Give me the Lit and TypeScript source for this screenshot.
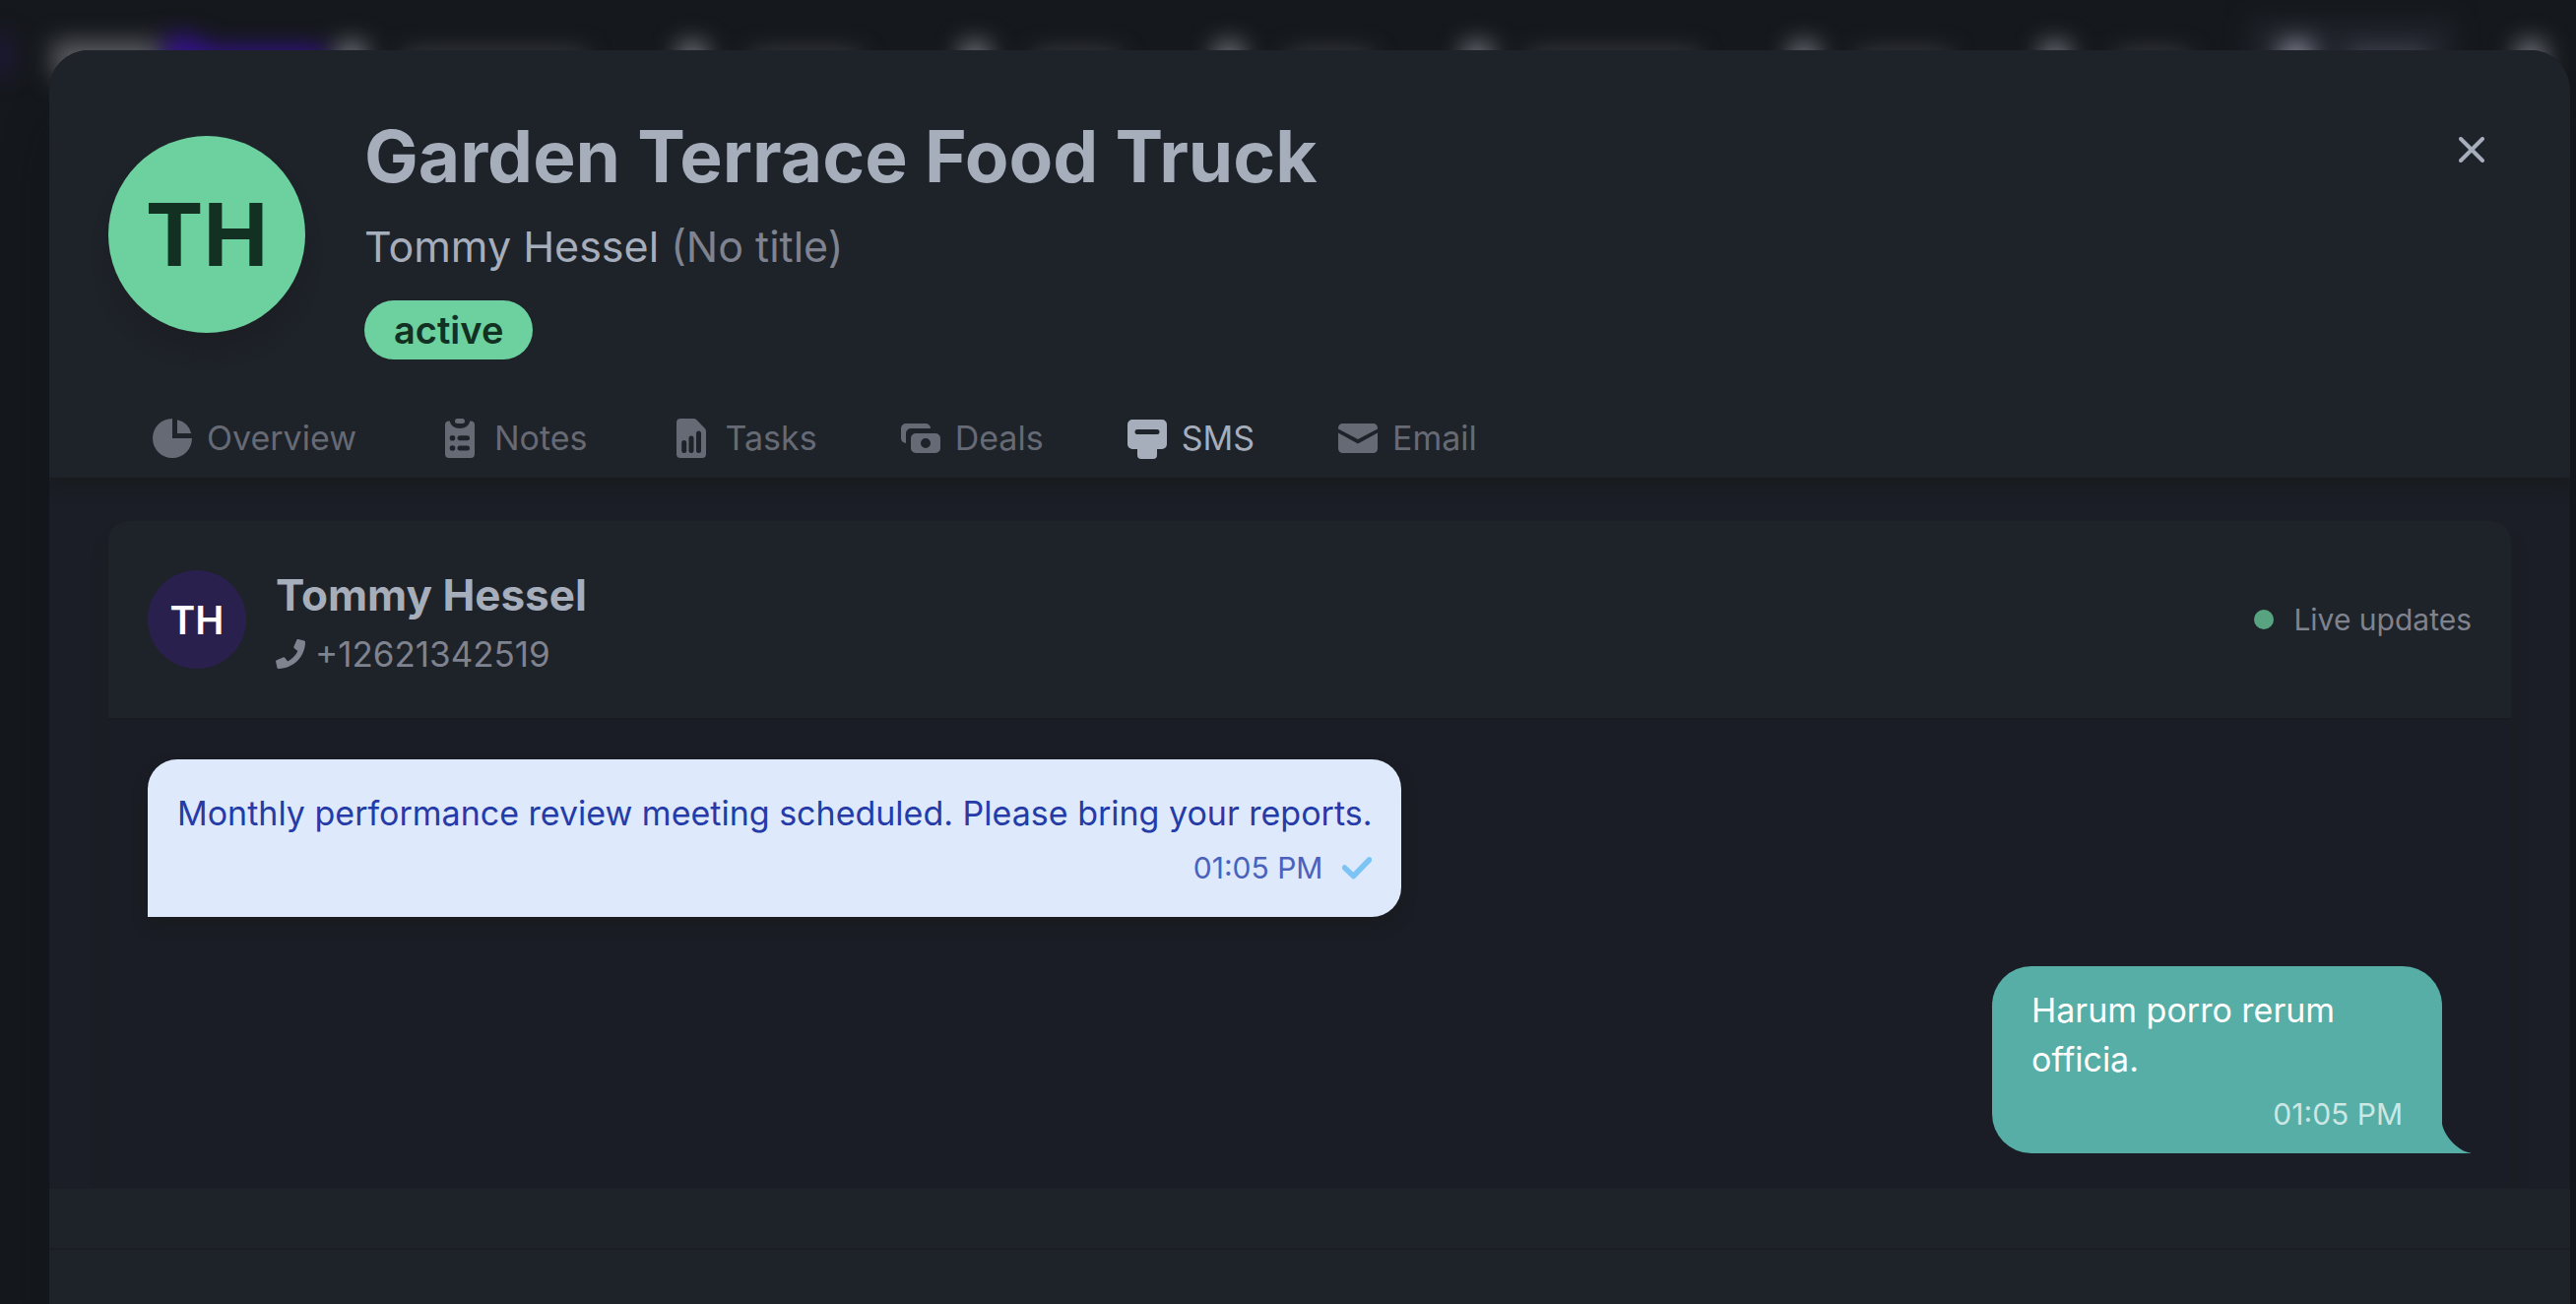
import { LitElement, html, css, svg } from "lit";
import { customElement, state } from "lit/decorators.js";
import { classMap } from "lit/directives/class-map.js";

const icons = {
  overview: svg`<svg viewBox="0 0 40 40" width="40" height="40"><path d="M20 0A20 20 0 1 0 40 20H20Z"/><path d="M25 1.2V15H39.2A19 19 0 0 0 25 1.2Z"/></svg>`,
  notes: svg`<svg viewBox="0 0 30 40" width="30" height="40"><path fill-rule="evenodd" d="M4 2.5H4.8C5.4 7 9.5 10 15 10S24.6 7 25.2 2.500H26A4 4 0 0 1 30 6.500V36A4 4 0 0 1 26 40H4A4 4 0 0 1 0 36V6.500A4 4 0 0 1 4 2.500ZM7.500 17A2.800 2.800 0 1 0 7.500 22.600A2.800 2.800 0 0 0 7.500 17ZM15 17.300A2.500 2.500 0 0 0 15 22.300H22.500A2.500 2.500 0 0 0 22.500 17.300ZM7.500 27.200A2.800 2.800 0 1 0 7.500 32.800A2.800 2.800 0 0 0 7.500 27.200ZM15 27.500A2.500 2.500 0 0 0 15 32.500H22.500A2.500 2.500 0 0 0 22.500 27.500Z"/><rect x="10" y="0" width="10" height="5" rx="2.500"/></svg>`,
  tasks: svg`<svg viewBox="0 0 30 40" width="30" height="40"><path fill-rule="evenodd" d="M4 0H17.500Q19 0 20.100 1.100L28.900 9.900Q30 11 30 12.500V36A4 4 0 0 1 26 40H4A4 4 0 0 1 0 36V4A4 4 0 0 1 4 0ZM5.200 24.500V32.500A2.500 2.500 0 0 0 10.200 32.500V24.500A2.500 2.500 0 0 0 5.200 24.500ZM12.500 20V32.500A2.500 2.500 0 0 0 17.500 32.500V20A2.500 2.500 0 0 0 12.500 20ZM20 15V32.500A2.500 2.500 0 0 0 25 32.500V15A2.500 2.500 0 0 0 20 15Z"/></svg>`,
  deals: svg`<svg viewBox="0 0 40 40" width="40" height="40"><path d="M5 5H25A5 5 0 0 1 30 10H10A5 5 0 0 0 5 15V25A5 5 0 0 1 0 20V10A5 5 0 0 1 5 5Z"/><path fill-rule="evenodd" d="M15 15H35A5 5 0 0 1 40 20V30A5 5 0 0 1 35 35H15A5 5 0 0 1 10 30V20A5 5 0 0 1 15 15ZM25 20A5 5 0 1 0 25 30A5 5 0 0 0 25 20Z"/></svg>`,
  sms: svg`<svg viewBox="0 0 40 42" width="40" height="42"><path fill-rule="evenodd" d="M5 2H35A5 5 0 0 1 40 7V27A5 5 0 0 1 35 32H30V38A4 4 0 0 1 26 42H14A4 4 0 0 1 10 38V32H5A5 5 0 0 1 0 27V7A5 5 0 0 1 5 2ZM10 12A2.500 2.500 0 0 0 10 17H30A2.500 2.500 0 0 0 30 12Z"/></svg>`,
  email: svg`<svg viewBox="0 0 40 40" width="40" height="40"><path d="M4.500 5H35.500A4.500 4.500 0 0 1 40 9.500V10.500L20 21L0 10.500V9.500A4.500 4.500 0 0 1 4.500 5Z"/><path d="M0 14.500L20 25.500L40 14.500V30.500A4.500 4.500 0 0 1 35.500 35H4.500A4.500 4.500 0 0 1 0 30.500Z"/></svg>`,
};

const tabs: { id: keyof typeof icons; label: string }[] = [
  { id: "overview", label: "Overview" },
  { id: "notes", label: "Notes" },
  { id: "tasks", label: "Tasks" },
  { id: "deals", label: "Deals" },
  { id: "sms", label: "SMS" },
  { id: "email", label: "Email" },
];

@customElement("message-thread")
export class MessageThread extends LitElement {
  static styles = css`
    :host { display: flex; flex-direction: column; flex: 1; }
    .card {
      flex: 1;
      border-radius: 20px 20px 0 0;
      background: #1a1d25;
      box-shadow: 0 20px 15px rgba(27, 30, 31, 1);
    }
    .head {
      display: flex;
      align-items: center;
      gap: 30px;
      padding: 40px;
      border-radius: 20px 20px 0 0;
      background: #1e2229;
      border-bottom: 2px solid #191b20;
    }
    .avatar {
      display: grid;
      place-items: center;
      width: 100px;
      height: 100px;
      border-radius: 50%;
      background: #2a204d;
      color: #fff;
      font-size: 39px;
      font-weight: 600;
    }
    .who { flex: 1; }
    .name { margin: 0; font-size: 44px; line-height: 70px; font-weight: 700; color: #a6adbb; }
    .phone {
      display: flex;
      align-items: center;
      gap: 10px;
      font-size: 35px;
      line-height: 50px;
      color: #7f838f;
      text-decoration: none;
    }
    .phone svg { fill: currentColor; }
    .live { display: flex; align-items: center; gap: 20px; font-size: 30px; line-height: 40px; color: #7f838f; }
    .dot { width: 20px; height: 20px; border-radius: 50%; background: #58a481; }
    .list {
      display: flex;
      flex-direction: column;
      gap: 50px;
      margin: 0;
      padding: 40px;
      list-style: none;
    }
    .msg { font-size: 34px; line-height: 50px; }
    .msg p { margin: 0; }
    .in {
      align-self: flex-start;
      padding: 30px;
      border-radius: 30px 30px 30px 0;
      background: #dee9fb;
      color: #243ba8;
      box-shadow: 0 8px 15px -2px #191b1d;
    }
    .out {
      position: relative;
      align-self: flex-end;
      box-sizing: border-box;
      max-width: 457px;
      margin-right: 30px;
      padding: 20px 40px;
      border-radius: 40px 40px 0 40px;
      background: #56aea6;
      color: #fff;
    }
    .tail { position: absolute; left: 100%; bottom: 0; fill: #56aea6; }
    .meta {
      display: flex;
      align-items: center;
      justify-content: flex-end;
      gap: 20px;
      margin-top: 10px;
      font-size: 30px;
      line-height: 40px;
    }
    .in time { color: #4b61ba; }
    .out time { color: #cce7e4; }
  `;

  render() {
    return html`
      <section class="card">
        <header class="head">
          <div class="avatar">TH</div>
          <div class="who">
            <h2 class="name">Tommy Hessel</h2>
            <a class="phone" href="tel:+12621342519">
              <svg viewBox="0 0 512 512" width="30" height="30" aria-hidden="true"><path d="M493 25L389 1C378-2 366 4 362 15L314 127C310 137 313 149 321 156L382 206C346 282 284 345 207 382L157 321C150 312 138 309 128 314L16 362C5 366-1 378 1 390L25 494C28 504 38 512 49 512C305 512 512 305 512 49C512 38 504 28 493 25Z"/></svg>
              <span>+12621342519</span>
            </a>
          </div>
          <div class="live"><span class="dot"></span><span>Live updates</span></div>
        </header>
        <ul class="list">
          <li class="msg in">
            <p>Monthly performance review meeting scheduled. Please bring your reports.</p>
            <div class="meta">
              <time>01:05 PM</time>
              <svg viewBox="0 0 30 30" width="30" height="30" aria-label="Delivered"><path d="M2.500 15L11.500 23.500L27.500 7" fill="none" stroke="#7cc4f5" stroke-width="5.500" stroke-linejoin="round" stroke-linecap="round"/></svg>
            </div>
          </li>
          <li class="msg out">
            <p>Harum porro rerum officia.</p>
            <div class="meta"><time>01:05 PM</time></div>
            <svg class="tail" viewBox="0 0 30 30" width="30" height="30" aria-hidden="true"><path d="M0 0C2 13 18 29 29 29.500V30H0Z"/></svg>
          </li>
        </ul>
      </section>
    `;
  }
}

@customElement("app-root")
export class AppRoot extends LitElement {
  @state() private active = "sms";

  static styles = css`
    :host {
      display: flex;
      flex-direction: column;
      position: relative;
      box-sizing: border-box;
      height: 100vh;
      overflow: hidden;
      background: #15181c;
      font-family: Inter, "Liberation Sans", sans-serif;
      color: #a6adbb;
    }
    .backdrop { position: absolute; inset: 0 0 auto 0; height: 120px; filter: blur(12px); }
    .backdrop svg { display: block; }
    .modal {
      position: relative;
      display: flex;
      flex-direction: column;
      flex: 1;
      min-height: 0;
      margin: 51px 6px 0 50px;
      overflow: hidden;
      border-radius: 40px 40px 0 0;
      background: #1b1e26;
      box-shadow: 0 62px 60px -20px rgba(16, 18, 22, 0.9);
    }
    .top {
      position: relative;
      padding: 60px 60px 0;
      background: #1e2229;
      box-shadow: 0 6px 14px #181a1c;
    }
    .identity { display: flex; align-items: center; gap: 60px; }
    .avatar {
      display: grid;
      place-items: center;
      width: 200px;
      height: 200px;
      border-radius: 50%;
      background: #6cd19f;
      color: #123122;
      font-size: 88px;
      line-height: 110px;
      font-weight: 700;
      box-shadow: 0 20px 20px -6px #1c1f24;
    }
    .title { margin: 0; font-size: 73px; line-height: 96px; font-weight: 700; }
    .person { margin: 8px 0 20px; font-size: 43px; line-height: 70px; }
    .muted { color: #7f838f; }
    .badge {
      display: inline-block;
      padding: 0 30px;
      border-radius: 30px;
      background: #6cd19f;
      color: #123122;
      font-size: 38px;
      line-height: 60px;
      font-weight: 600;
      vertical-align: top;
    }
    .close {
      position: absolute;
      top: 71px;
      right: 70px;
      display: grid;
      place-items: center;
      width: 60px;
      height: 60px;
      padding: 0;
      border: 0;
      background: none;
    }
    .tabs { display: flex; margin-top: 40px; }
    .tab {
      display: flex;
      align-items: center;
      gap: 10px;
      height: 80px;
      padding: 0 40px;
      border: 0;
      background: none;
      color: #666a75;
      font-family: inherit;
      font-size: 34px;
      line-height: 50px;
    }
    .tab.on { color: #a6adbb; }
    .icon { display: grid; place-items: center; width: 50px; fill: currentColor; }
    .body { display: flex; flex: 1; min-height: 0; padding: 44px 60px 0; overflow: hidden; }
    .foot { position: relative; background: #1e2229; }
    .strip { height: 60px; border-bottom: 2px solid #1b1d24; }
    .base { height: 55px; }
  `;

  render() {
    const glyphs = [357, 703, 990, 1248, 1500, 1832, 2087];
    const words = [[410, 185], [763, 110], [1050, 87], [1308, 85], [1553, 172], [1887, 93], [2150, 72]];
    return html`
      <div class="backdrop" aria-hidden="true">
        <svg width="2616" height="120">
          <rect x="-30" y="34" width="36" height="44" fill="#351a7c" />
          <rect x="54" y="42" width="108" height="38" fill="#5c5d62" />
          <path d="M168 36H196L214 48H330V84H168Z" fill="#34128a" />
          ${glyphs.map((x) => svg`<rect x=${x - 14} y="43" width="28" height="34" fill="#777a82" />`)}
          ${words.map(([x, w]) => svg`<rect x=${x} y="52" width=${w} height="24" fill="#3d3f45" />`)}
          <rect x="2284" y="20" width="208" height="80" fill="#1f222a" />
          <rect x="2316" y="42" width="32" height="34" fill="#868995" />
          <rect x="2385" y="50" width="80" height="24" fill="#454955" />
          <rect x="2556" y="42" width="28" height="36" fill="#777a82" />
        </svg>
      </div>
      <main class="modal">
        <header class="top">
          <div class="identity">
            <div class="avatar">TH</div>
            <div>
              <h1 class="title">Garden Terrace Food Truck</h1>
              <p class="person">Tommy Hessel <span class="muted">(No title)</span></p>
              <span class="badge">active</span>
            </div>
          </div>
          <button class="close" aria-label="Close">
            <svg viewBox="0 0 26 26" width="26" height="26" aria-hidden="true"><path d="M2 2L24 24M24 2L2 24" fill="none" stroke="#a6adbb" stroke-width="4" stroke-linecap="round"/></svg>
          </button>
          <nav class="tabs" role="tablist">
            ${tabs.map(
              (t) => html`<button
                class=${classMap({ tab: true, on: t.id === this.active })}
                role="tab"
                aria-selected=${t.id === this.active ? "true" : "false"}
                @click=${() => (this.active = t.id)}
              ><span class="icon">${icons[t.id]}</span><span>${t.label}</span></button>`
            )}
          </nav>
        </header>
        <div class="body"><message-thread></message-thread></div>
        <footer class="foot"><div class="strip"></div><div class="base"></div></footer>
      </main>
    `;
  }
}
